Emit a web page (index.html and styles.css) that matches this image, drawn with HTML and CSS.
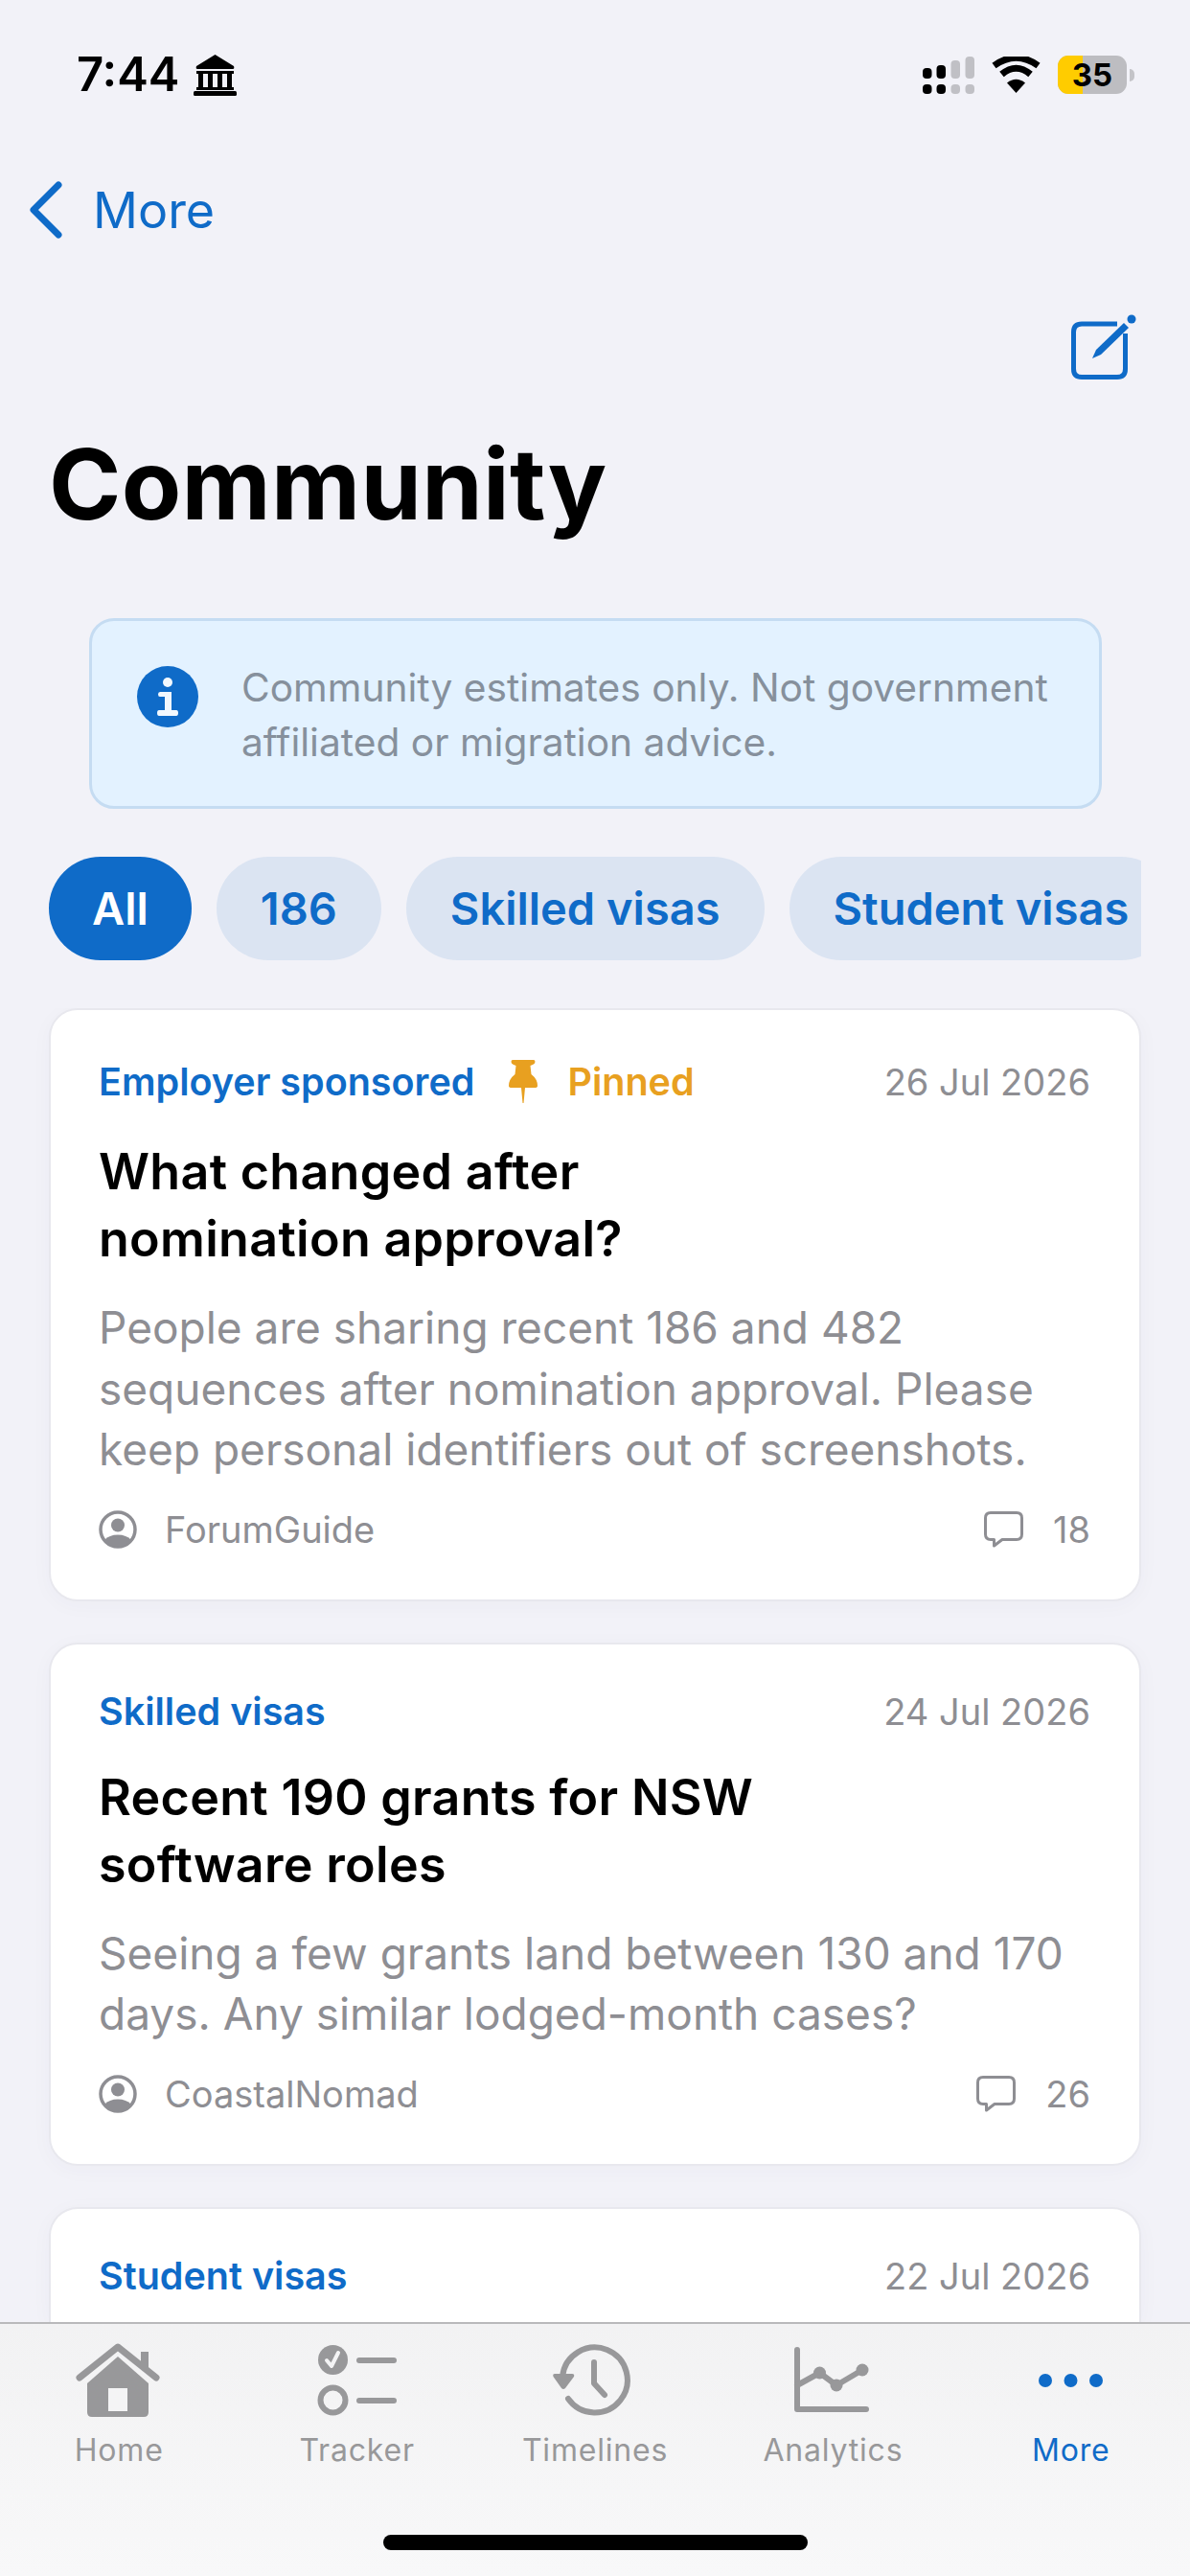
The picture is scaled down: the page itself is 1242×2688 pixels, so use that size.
FILE: index.html
```html
<!DOCTYPE html>
<html lang="en">

<head>
    <meta charset="UTF-8">
    <meta name="viewport" content="width=device-width, initial-scale=1.0">
    <title>Community</title>
    <link rel="stylesheet" href="styles.css">
</head>

<body>
    <div class="screen">

        <div class="status">
            <div class="status__left">
                <span class="status__time">7:44</span>
                <svg class="icon-bank" viewBox="0 0 45 43">
                    <path d="M22.500 0 L42 12 Q43 15 41 15 H4 Q2 15 3 12 Z" />
                    <rect x="3" y="17" width="39" height="3" />
                    <rect x="5" y="20" width="5" height="15" />
                    <rect x="15" y="20" width="5" height="15" />
                    <rect x="25" y="20" width="5" height="15" />
                    <rect x="35" y="20" width="5" height="15" />
                    <rect x="3" y="34" width="39" height="3" />
                    <rect x="0" y="38" width="45" height="5" rx="1.500" />
                </svg>
            </div>
            <div class="status__right">
                <svg class="icon-signal" viewBox="0 0 54 39">
                    <rect x="0" y="12" width="9.500" height="11" rx="4" />
                    <rect x="0" y="29" width="9.500" height="10" rx="4" />
                    <rect x="14.500" y="9" width="9.500" height="14" rx="4" />
                    <rect x="14.500" y="29" width="9.500" height="10" rx="4" />
                    <rect class="off" x="29.500" y="4" width="9.500" height="19" rx="4" />
                    <rect class="off" x="29.500" y="29" width="9.500" height="10" rx="4" />
                    <rect class="off" x="44.500" y="0" width="9.500" height="23" rx="4" />
                    <rect class="off" x="44.500" y="29" width="9.500" height="10" rx="4" />
                </svg>
                <svg class="icon-wifi" viewBox="0 0 51 38">
                    <path d="M25.500 38 L16 27.500 Q25.500 20 35 27.500 Z" />
                    <path class="arc" d="M10.500 18.500 Q25.500 6 40.500 18.500" />
                    <path class="arc" d="M2.500 9.500 Q25.500 -7 48.500 9.500" />
                </svg>
                <div class="battery">
                    <div class="battery__body">
                        <div class="battery__fill"></div>
                        <span class="battery__num">35</span>
                    </div>
                    <div class="battery__nub"></div>
                </div>
            </div>
        </div>

        <div class="nav">
            <svg class="icon-back" viewBox="0 0 35 60">
                <path d="M31 4 L5 30 L31 56" />
            </svg>
            <span class="nav__label">More</span>
        </div>

        <div class="actions">
            <svg class="icon-compose" viewBox="0 0 68 68">
                <path class="frame" d="M48 10 H11 Q2.500 10 2.500 18.500 V57 Q2.500 65.500 11 65.500 H48 Q56.500 65.500 56.500 57 V20" />
                <path class="pen" d="M22 46 L26 37 L55 9 L60 14 L31 42 Z" />
                <circle class="pen" cx="63" cy="5" r="4.500" />
            </svg>
        </div>

        <h1 class="title">Community</h1>

        <div class="notice">
            <svg class="icon-info" viewBox="0 0 64 64">
                <circle class="disc" cx="32" cy="32" r="32" />
                <circle class="mark" cx="32" cy="17" r="5" />
                <path class="mark" d="M24 27 H36 V46 H41 Q43 46 43 49 Q43 52 41 52 H23 Q21 52 21 49 Q21 46 23 46 H29 V32 H24 Q22 32 22 29.500 Q22 27 24 27 Z" />
            </svg>
            <p class="notice__text">Community estimates only. Not government affiliated or migration advice.</p>
        </div>

        <div class="chips">
            <span class="chip chip--on">All</span>
            <span class="chip">186</span>
            <span class="chip">Skilled visas</span>
            <span class="chip">Student visas</span>
        </div>

        <div class="feed">

            <div class="card">
                <div class="card__top">
                    <span class="card__cat">Employer sponsored</span>
                    <svg class="icon-pin" viewBox="0 0 30 45">
                        <path d="M4 0 H26 Q27.500 0 27.500 2 Q27.500 4 25 5 L22.500 6 L23.500 15 Q30 20 30 27 Q30 29 27 29 H17 L15.500 45 H14.500 L13 29 H3 Q0 29 0 27 Q0 20 6.500 15 L7.500 6 L5 5 Q2.500 4 2.500 2 Q2.500 0 4 0 Z" />
                    </svg>
                    <span class="card__pinned">Pinned</span>
                    <span class="card__date">26 Jul 2026</span>
                </div>
                <h2 class="card__title">What changed after<br>nomination approval?</h2>
                <p class="card__body">People are sharing recent 186 and 482 sequences after nomination approval. Please keep personal identifiers out of screenshots.</p>
                <div class="card__foot">
                    <svg class="icon-user" viewBox="0 0 40 40">
                        <circle class="ring" cx="20" cy="20" r="18" />
                        <circle cx="20" cy="15.500" r="7" />
                        <path d="M6 31 Q11 25.500 20 25.500 Q29 25.500 34 31 Q28 38 20 38 Q12 38 6 31 Z" />
                    </svg>
                    <span class="card__author">ForumGuide</span>
                    <svg class="icon-comment" viewBox="0 0 41 38">
                        <path d="M7 1.500 H34 Q39.500 1.500 39.500 7 V24 Q39.500 29.500 34 29.500 H19 L10.500 36 V29.500 H7 Q1.500 29.500 1.500 24 V7 Q1.500 1.500 7 1.500 Z" />
                    </svg>
                    <span class="card__count">18</span>
                </div>
            </div>

            <div class="card">
                <div class="card__top">
                    <span class="card__cat">Skilled visas</span>
                    <span class="card__date">24 Jul 2026</span>
                </div>
                <h2 class="card__title">Recent 190 grants for NSW<br>software roles</h2>
                <p class="card__body">Seeing a few grants land between 130 and 170 days. Any similar lodged-month cases?</p>
                <div class="card__foot">
                    <svg class="icon-user" viewBox="0 0 40 40">
                        <circle class="ring" cx="20" cy="20" r="18" />
                        <circle cx="20" cy="15.500" r="7" />
                        <path d="M6 31 Q11 25.500 20 25.500 Q29 25.500 34 31 Q28 38 20 38 Q12 38 6 31 Z" />
                    </svg>
                    <span class="card__author">CoastalNomad</span>
                    <svg class="icon-comment" viewBox="0 0 41 38">
                        <path d="M7 1.500 H34 Q39.500 1.500 39.500 7 V24 Q39.500 29.500 34 29.500 H19 L10.500 36 V29.500 H7 Q1.500 29.500 1.500 24 V7 Q1.500 1.500 7 1.500 Z" />
                    </svg>
                    <span class="card__count">26</span>
                </div>
            </div>

            <!-- runs on under the tab bar -->
            <div class="card card--cut">
                <div class="card__top">
                    <span class="card__cat">Student visas</span>
                    <span class="card__date">22 Jul 2026</span>
                </div>
            </div>

        </div>

        <div class="tabs">
            <div class="tabs__row">
                <div class="tab">
                    <svg class="tab__icon" viewBox="0 0 90 78">
                        <path d="M12 42 L44 14 L76 42 V72 Q76 77 71 77 H17 Q12 77 12 72 Z" />
                        <rect class="door" x="34" y="47" width="20" height="24" />
                        <path class="roof" d="M4 36 L44 4 L84 36" />
                        <rect x="68" y="9" width="8" height="18" />
                    </svg>
                    <span class="tab__label">Home</span>
                </div>
                <div class="tab">
                    <svg class="tab__icon" viewBox="0 0 90 78">
                        <circle cx="19.500" cy="17.500" r="15.500" />
                        <path class="tick" d="M13 18 L18 24 L25 10" />
                        <circle class="line" cx="19.500" cy="59.500" r="13" />
                        <path class="line" d="M47 18 H83" />
                        <path class="line" d="M47 60 H83" />
                    </svg>
                    <span class="tab__label">Tracker</span>
                </div>
                <div class="tab">
                    <svg class="tab__icon" viewBox="0 0 90 78">
                        <path class="line" d="M11 35 A34 34 0 1 1 17 58" />
                        <path d="M3 32 H21 Q24 32 23 35 L14 47 Q12 49 10 47 L1.500 35 Q0.500 32 3 32 Z" />
                        <path class="line" d="M44 20 V42 L55 54" />
                    </svg>
                    <span class="tab__label">Timelines</span>
                </div>
                <div class="tab">
                    <svg class="tab__icon" viewBox="0 0 90 78">
                        <path class="line" d="M8 7 V69 H80" />
                        <path class="line" d="M8 44 L31.500 31 L49 44 L76 28" />
                        <circle cx="31.500" cy="31" r="6.500" />
                        <circle cx="49" cy="44" r="6.500" />
                        <circle cx="76" cy="28" r="6.500" />
                    </svg>
                    <span class="tab__label">Analytics</span>
                </div>
                <div class="tab tab--on">
                    <svg class="tab__icon" viewBox="0 0 90 78">
                        <circle cx="18" cy="39" r="7" />
                        <circle cx="44.500" cy="39" r="7" />
                        <circle cx="71" cy="39" r="7" />
                    </svg>
                    <span class="tab__label">More</span>
                </div>
            </div>
            <div class="tabs__home"></div>
        </div>

    </div>
</body>

</html>
```

FILE: styles.css
```css
* {
    box-sizing: border-box;
}

html,
body {
    margin: 0;
    padding: 0;
}

body {
    font-family: Inter, "Noto Sans", sans-serif;
    background: #f2f2f8;
}

.screen {
    display: flex;
    flex-direction: column;
    width: 1242px;
    height: 2688px;
    overflow: hidden;
    background: #f2f2f8;
}

/* status bar */
.status {
    flex: none;
    display: flex;
    justify-content: space-between;
    align-items: center;
    height: 156px;
    padding: 0 58px 0 80px;
}

.status__left {
    display: flex;
    align-items: center;
    gap: 15px;
}

.status__time {
    font-size: 49px;
    font-weight: 600;
    line-height: 50px;
    color: #000;
}

.icon-bank {
    width: 45px;
    height: 43px;
    fill: #000;
}

.status__right {
    display: flex;
    align-items: center;
}

.icon-signal {
    width: 54px;
    height: 39px;
    margin-right: 18px;
    fill: #000;
}

.icon-signal .off {
    fill: #c0c0c5;
}

.icon-wifi {
    width: 51px;
    height: 38px;
    margin-right: 18px;
    fill: #000;
}

.icon-wifi .arc {
    fill: none;
    stroke: #000;
    stroke-width: 7;
}

.battery {
    display: flex;
    align-items: center;
    gap: 3px;
}

.battery__body {
    position: relative;
    width: 72px;
    height: 40px;
    border-radius: 11px;
    background: #bdbdc1;
    overflow: hidden;
    text-align: center;
}

.battery__fill {
    position: absolute;
    left: 0;
    top: 0;
    bottom: 0;
    width: 26px;
    background: #ffcc00;
}

.battery__num {
    position: relative;
    font-size: 33px;
    font-weight: 700;
    line-height: 40px;
    color: #000;
}

.battery__nub {
    width: 5px;
    height: 13px;
    border-radius: 0 5px 5px 0;
    background: #c4c4c8;
}

/* back row */
.nav {
    flex: none;
    display: flex;
    align-items: center;
    gap: 32px;
    height: 126px;
    padding-left: 30px;
}

.icon-back {
    width: 35px;
    height: 60px;
    fill: none;
    stroke: #0f6bc8;
    stroke-width: 7;
    stroke-linecap: round;
    stroke-linejoin: round;
}

.nav__label {
    font-size: 52px;
    color: #0f6bc8;
}

.actions {
    flex: none;
    display: flex;
    justify-content: flex-end;
    padding: 46px 56px 0 0;
}

.icon-compose {
    width: 68px;
    height: 68px;
}

.icon-compose .frame {
    fill: none;
    stroke: #0f6bc8;
    stroke-width: 5;
}

.icon-compose .pen {
    fill: #0f6bc8;
}

.title {
    flex: none;
    margin: 48px 0 0;
    padding-left: 51px;
    font-size: 102px;
    font-weight: 700;
    line-height: 122px;
    letter-spacing: 0.3px;
    color: #000;
}

/* info banner */
.notice {
    flex: none;
    display: flex;
    align-items: flex-start;
    gap: 45px;
    height: 199px;
    margin: 79px 92px 0 93px;
    padding: 47px 20px 0 47px;
    border: 3px solid #c5dcf2;
    border-radius: 26px;
    background: #e3f2ff;
}

.icon-info {
    flex: none;
    width: 64px;
    height: 64px;
}

.icon-info .disc {
    fill: #0f6bc8;
}

.icon-info .mark {
    fill: #f2f8fe;
}

.notice__text {
    margin: -6px 0 0;
    font-size: 40.700px;
    line-height: 57px;
    color: #86909c;
}

/* filter chips */
.chips {
    flex: none;
    display: flex;
    gap: 26px;
    height: 108px;
    margin: 50px 51px 0;
    overflow: hidden;
}

.chip {
    flex: none;
    padding: 0 46px;
    border-radius: 54px;
    background: #dbe4f2;
    font-size: 47px;
    font-weight: 600;
    line-height: 108px;
    color: #0f6bc8;
}

.chip--on {
    padding: 0 45px;
    background: #0f6bc8;
    color: #fff;
}

/* posts */
.feed {
    flex: 1;
    min-height: 0;
    display: flex;
    flex-direction: column;
    gap: 43px;
    margin-top: 50px;
    padding: 0 51px;
    overflow: hidden;
}

.card {
    flex: none;
    padding: 0 51px 0 50px;
    border: 2px solid #e8e8ee;
    border-radius: 30px;
    background: #fff;
    box-shadow: 0 4px 22px rgba(60, 60, 90, 0.03);
}

.card--cut {
    flex: 1 0 auto;
    border-bottom: 0;
    border-radius: 30px 30px 0 0;
}

/* the pin is taller than the text, so pinned rows come out higher */
.card__top {
    display: flex;
    align-items: center;
    min-height: 44px;
    margin-top: 48px;
}

.card__cat {
    font-size: 39.500px;
    line-height: 44px;
    font-weight: 600;
    color: #0f6bc8;
}

.icon-pin {
    width: 30px;
    height: 45px;
    margin: 4px 0 4px 36px;
    fill: #e8a020;
}

.card__pinned {
    margin-left: 31px;
    font-size: 39.500px;
    line-height: 44px;
    font-weight: 600;
    color: #e8a020;
}

.card__date {
    margin-left: auto;
    font-size: 38px;
    line-height: 44px;
    color: #8e8e93;
}

.card__title {
    margin: 33px 0 0;
    font-size: 52px;
    font-weight: 600;
    line-height: 70px;
    letter-spacing: 0.3px;
    color: #000;
}

.card__body {
    margin: 26px 0 0;
    font-size: 46px;
    line-height: 63.500px;
    color: #8e8e93;
}

.card__foot {
    display: flex;
    align-items: center;
    height: 56px;
    margin: 23px 0 45px;
}

.icon-user {
    width: 40px;
    height: 40px;
    margin-right: 29px;
    fill: #8e8e93;
}

.icon-user .ring {
    fill: none;
    stroke: #8e8e93;
    stroke-width: 3.500;
}

.card__author {
    font-size: 38px;
    color: #8e8e93;
}

.icon-comment {
    width: 41px;
    height: 38px;
    margin-left: auto;
    fill: none;
    stroke: #8e8e93;
    stroke-width: 3;
    stroke-linejoin: round;
}

.card__count {
    margin-left: 31px;
    font-size: 38px;
    color: #8e8e93;
}

/* tab bar */
.tabs {
    flex: none;
    height: 265px;
    border-top: 2px solid #b9b9bb;
    background: linear-gradient(#f2f2f3, #f8f8f9);
}

.tabs__row {
    display: flex;
    padding-top: 20px;
}

.tab {
    flex: 1;
    display: flex;
    flex-direction: column;
    align-items: center;
    color: #98989a;
}

.tab__icon {
    width: 90px;
    height: 78px;
    fill: #98989a;
}

.tab__icon .line {
    fill: none;
    stroke: #98989a;
    stroke-width: 6;
    stroke-linecap: round;
    stroke-linejoin: round;
}

.tab__icon .roof {
    fill: none;
    stroke: #98989a;
    stroke-width: 7;
    stroke-linecap: round;
    stroke-linejoin: round;
}

.tab__icon .door {
    fill: #f4f4f5;
}

.tab__icon .tick {
    fill: none;
    stroke: #f4f4f5;
    stroke-width: 4;
    stroke-linecap: round;
    stroke-linejoin: round;
}

.tab__label {
    margin-top: 14px;
    font-size: 32px;
    line-height: 40px;
    letter-spacing: 0.8px;
}

.tab--on {
    color: #0f6bc8;
}

.tab--on .tab__icon {
    fill: #0f6bc8;
}

.tabs__home {
    width: 443px;
    height: 16px;
    margin: 68px auto 0;
    border-radius: 8px;
    background: #000;
}
```
